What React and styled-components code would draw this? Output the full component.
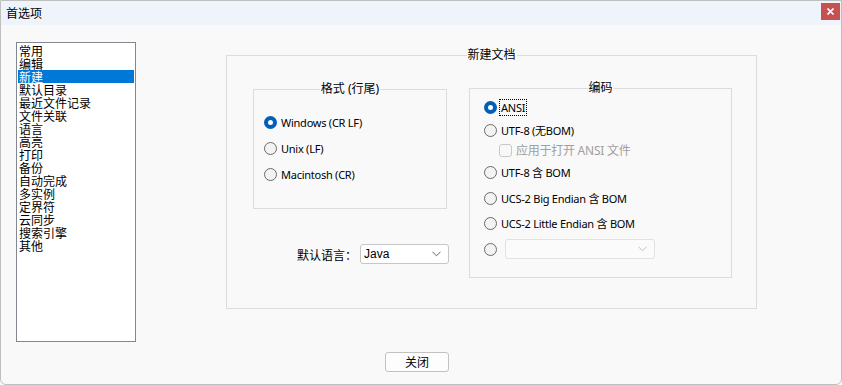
import React from 'react';
import styled, { createGlobalStyle } from 'styled-components';

const GlobalStyle = createGlobalStyle`
  html, body { margin: 0; padding: 0; background: #f9f9f9; }
  body { font-family: "Noto Sans", "Noto Sans CJK SC", sans-serif; font-size: 12px; font-weight: 400; color: #000; }
  * { box-sizing: border-box; }
`;

const Window = styled.div`
  width: 842px;
  height: 385px;
  border: 1px solid #bfbfbf;
  border-radius: 0 0 6px 6px;
  background: #f9f9f9;
  display: flex;
  flex-direction: column;
  overflow: hidden;
`;

const TitleBar = styled.div`
  height: 24px;
  flex: none;
  background: #eef4fa;
  display: flex;
  align-items: flex-start;
  justify-content: space-between;
  padding-left: 5px;
`;

const Title = styled.span`
  font-family: "Noto Sans CJK SC", sans-serif;
  font-size: 12px;
  line-height: 24px;
`;

const CloseBox = styled.button`
  width: 19px;
  height: 17px;
  margin: 2px 1px 0 0;
  padding: 0;
  border: 0;
  background: #c75050;
  display: flex;
  align-items: center;
  justify-content: center;
`;

const Body = styled.div`
  display: flex;
  align-items: flex-start;
  padding: 17px 0 0 15px;
  height: 317px;
  flex: none;
`;

const ListBox = styled.div`
  width: 120px;
  height: 300px;
  border: 1px solid #828790;
  background: #fff;
  padding: 1px;
  flex: none;
`;

const ListItem = styled.div`
  height: 13px;
  line-height: 13px;
  font-family: "Noto Sans CJK SC", sans-serif;
  font-size: 12px;
  padding-left: 1px;
  white-space: nowrap;
  background: ${p => (p.$selected ? '#0078d7' : 'transparent')};
  color: ${p => (p.$selected ? '#fff' : '#000')};
`;

const GroupBox = styled.div`
  position: relative;
  flex: none;
  border: 1px solid #dcdcdc;
  width: ${p => p.$w}px;
  height: ${p => p.$h}px;
`;

const Panel = styled(GroupBox)`
  margin: 13px 0 0 90px;
  padding: 33px 0 0 26px;
  display: flex;
  align-items: flex-start;
  gap: 22px;
`;

const Legend = styled.span`
  position: absolute;
  top: -9px;
  left: 50%;
  transform: translateX(-50%);
  background: #f9f9f9;
  padding: 0 1px;
  line-height: 16px;
  font-family: "Noto Sans", "Noto Sans CJK SC", sans-serif;
  font-size: 12px;
  white-space: nowrap;
`;

const LeftCol = styled.div`
  width: 194px;
  display: flex;
  flex-direction: column;
`;

const FormatBox = styled(GroupBox)`
  padding: 19px 0 0 10px;
`;

const EncodingBox = styled(GroupBox)`
  margin-top: -1px;
  padding: 0 0 0 14px;
`;

const OptionRow = styled.div`
  display: flex;
  align-items: center;
  gap: 3px;
  height: ${p => p.$h || 20}px;
  margin-top: ${p => p.$mt || 0}px;
  padding-left: ${p => p.$indent || 0}px;
  white-space: nowrap;
  font-size: 11px;
  letter-spacing: -0.25px;
  color: ${p => (p.$disabled ? '#a0a0a0' : '#000')};
`;

const RadioDot = styled.span`
  width: 13px;
  height: 13px;
  flex: none;
  border-radius: 50%;
  border: ${p => (p.$checked ? '4px solid #005fb8' : '1px solid #6a6a6a')};
  background: ${p => (p.$checked ? '#fff' : '#f3f3f3')};
`;

const CheckBox = styled.span`
  width: 13px;
  height: 13px;
  flex: none;
  border: 1px solid #c8c8c8;
  border-radius: 3px;
  background: #f8f8f8;
`;

const Label = styled.span`
  line-height: 15px;
  font-size: ${p => p.$size || 11}px;
  border: 1px dotted ${p => (p.$focus ? '#000' : 'transparent')};
  padding: 0 1px;
  margin-left: -1px;
`;

const LangRow = styled.div`
  margin: 35px -2px 0 0;
  height: 20px;
  display: flex;
  align-items: center;
  justify-content: flex-end;
  gap: 3px;
`;

const LangLabel = styled.span`
  font-family: "Noto Sans CJK SC", sans-serif;
  font-size: 12px;
`;

const Combo = styled.div`
  width: ${p => p.$w}px;
  height: 20px;
  flex: none;
  border: 1px solid ${p => (p.$disabled ? '#e2e2e2' : '#c6c6c6')};
  border-radius: 3px;
  background: ${p => (p.$disabled ? '#fbfbfb' : '#fff')};
  display: flex;
  align-items: center;
  justify-content: space-between;
  padding: 0 7px 0 3px;
  margin-left: ${p => p.$ml || 0}px;
  font-family: "Liberation Sans", sans-serif;
  font-size: 12px;
  letter-spacing: 0;
`;

const Footer = styled.div`
  margin-top: 10px;
  padding-left: 384px;
  display: flex;
`;

const Button = styled.button`
  width: 64px;
  height: 20px;
  padding: 0;
  border: 1px solid #c2c2c2;
  border-radius: 3px;
  background: #fdfdfd;
  font-family: "Noto Sans CJK SC", sans-serif;
  font-size: 12px;
  color: #000;
  line-height: 18px;
`;

const Chevron = ({ color }) => (
  <svg width="9" height="6" viewBox="0 0 9 6">
    <path d="M0.5 0.8 L4.5 4.8 L8.5 0.8" fill="none" stroke={color} strokeWidth="1" />
  </svg>
);

const items = ['常用', '编辑', '新建', '默认目录', '最近文件记录', '文件关联', '语言', '高亮', '打印', '备份', '自动完成', '多实例', '定界符', '云同步', '搜索引擎', '其他'];

const Radio = ({ checked, children, focus, ...rest }) => (
  <OptionRow {...rest}>
    <RadioDot $checked={checked} />
    {children !== undefined && <Label $focus={focus}>{children}</Label>}
  </OptionRow>
);

export default function App() {
  return (
    <>
      <GlobalStyle />
      <Window>
        <TitleBar>
          <Title>首选项</Title>
          <CloseBox aria-label="close">
            <svg width="7" height="7" viewBox="0 0 7 7">
              <path d="M0.5 0.5 L6.5 6.5 M6.5 0.5 L0.5 6.5" stroke="#fff" strokeWidth="1.6" />
            </svg>
          </CloseBox>
        </TitleBar>
        <Body>
          <ListBox>
            {items.map(t => (
              <ListItem key={t} $selected={t === '新建'}>{t}</ListItem>
            ))}
          </ListBox>
          <Panel $w={531} $h={254}>
            <Legend>新建文档</Legend>
            <LeftCol>
              <FormatBox $w={194} $h={120}>
                <Legend>格式 (行尾)</Legend>
                <Radio $h={26} checked>Windows (CR LF)</Radio>
                <Radio $h={26}>Unix (LF)</Radio>
                <Radio $h={26}>Macintosh (CR)</Radio>
              </FormatBox>
              <LangRow>
                <LangLabel>默认语言：</LangLabel>
                <Combo $w={89}>
                  <span>Java</span>
                  <Chevron color="#606060" />
                </Combo>
              </LangRow>
            </LeftCol>
            <EncodingBox $w={263} $h={190}>
              <Legend>编码</Legend>
              <Radio $mt={8} checked focus>ANSI</Radio>
              <Radio $mt={3}>UTF-8 (无BOM)</Radio>
              <OptionRow $indent={15} $disabled>
                <CheckBox />
                <Label $size={12}>应用于打开 ANSI 文件</Label>
              </OptionRow>
              <Radio $mt={2}>UTF-8 含 BOM</Radio>
              <Radio $mt={6}>UCS-2 Big Endian 含 BOM</Radio>
              <Radio $mt={5}>UCS-2 Little Endian 含 BOM</Radio>
              <OptionRow $mt={6}>
                <RadioDot />
                <Combo $w={150} $disabled $ml={5}>
                  <span />
                  <Chevron color="#c0c0c0" />
                </Combo>
              </OptionRow>
            </EncodingBox>
          </Panel>
        </Body>
        <Footer>
          <Button>关闭</Button>
        </Footer>
      </Window>
    </>
  );
}
